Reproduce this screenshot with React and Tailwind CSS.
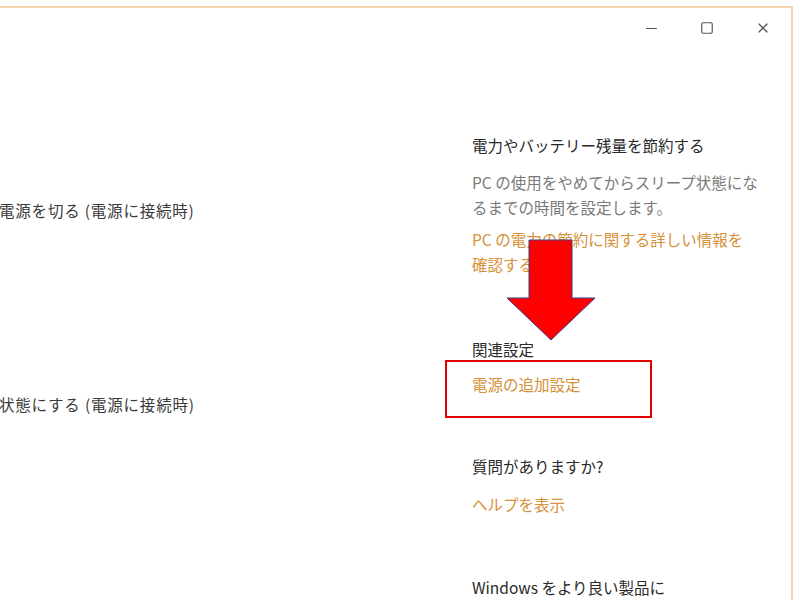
import { Minus, Square, X } from 'lucide-react'

const jp = { fontFamily: '"Noto Sans CJK JP", "Noto Sans", sans-serif' }

export default function App() {
  return (
    <div className="relative w-[800px] h-[600px] overflow-hidden bg-white pt-[6px] pr-[7px]" style={jp}>
      <div className="h-[620px] border-t-2 border-r-2 border-[#f4d3ae] flex flex-col">
        {/* title bar */}
        <div className="h-[40px] flex justify-end text-[#555]">
          <div className="w-[56px] flex items-center justify-center">
            <Minus size={17} strokeWidth={1.6} />
          </div>
          <div className="w-[56px] flex items-center justify-center">
            <Square size={14} strokeWidth={2} />
          </div>
          <div className="w-[56px] flex items-center justify-center">
            <X size={16} strokeWidth={1.9} />
          </div>
        </div>

        <div className="flex text-[15.5px] leading-[25px]">
          {/* left settings, cut off */}
          <div className="w-[470px] shrink-0 text-[#3a3a3a] tracking-[0.8px]">
            <p className="mt-[150px] -ml-[1px]">電源を切る (電源に接続時)</p>
            <p className="mt-[169px] -ml-[1px]">状態にする (電源に接続時)</p>
          </div>

          {/* right side panel */}
          <div className="flex-1 pl-[2px]">
            <p className="mt-[85px] text-[#2a2a2a]">電力やバッテリー残量を節約する</p>
            <p className="mt-[12px] text-[#7a7a7a]">
              PC の使用をやめてからスリープ状態にな<br />るまでの時間を設定します。
            </p>
            <p className="mt-[7px] text-[#d6913a]">
              PC の電力の節約に関する詳しい情報を<br />確認する
            </p>
            <p className="mt-[60px] text-[#2a2a2a]">関連設定</p>
            <p className="mt-[10px] text-[#d6913a]">電源の追加設定</p>
            <p className="mt-[57px] text-[#2a2a2a]">質問がありますか?</p>
            <p className="mt-[13px] text-[#d6913a]">ヘルプを表示</p>
            <p className="mt-[58px] text-[#2a2a2a]">Windows をより良い製品に</p>
          </div>
        </div>
      </div>

      {/* annotation: arrow */}
      <svg className="absolute left-0 top-0 pointer-events-none" width="800" height="600">
        <polygon
          points="529,240 572,240 572,298 595,298 551,340 507,298 529,298"
          fill="#ff0000"
          stroke="#3c3c8a"
          strokeWidth="1"
        />
      </svg>

      {/* annotation: highlight box */}
      <div className="absolute left-[445px] top-[360px] w-[207px] h-[58px] border-2 border-[#e30000]" />
    </div>
  )
}
